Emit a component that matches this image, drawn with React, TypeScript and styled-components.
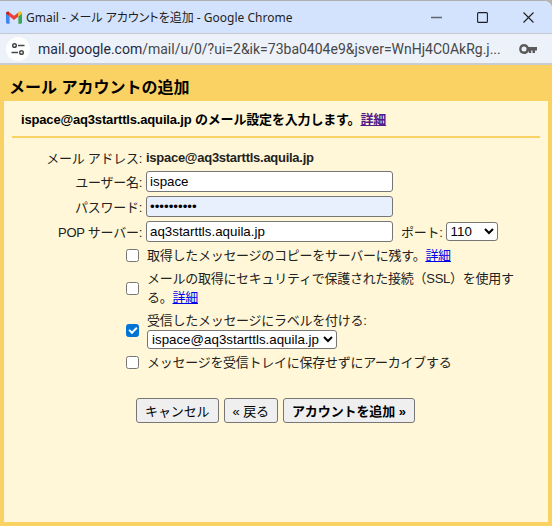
import styled, { createGlobalStyle } from "styled-components";

const FONT = `"Liberation Sans", "Noto Sans CJK JP", sans-serif`;

const GlobalStyle = createGlobalStyle`
  html, body {
    margin: 0;
    padding: 0;
    background: #b4b4b4;
  }
  #root {
    width: 552px;
    height: 526px;
  }
`;

const Window = styled.div`
  width: 552px;
  height: 526px;
  box-sizing: border-box;
  border-top: 1px solid #b0b0b0;
  display: flex;
  flex-direction: column;
  overflow: hidden;
  border-top-right-radius: 8px;
  background: #fff7d7;
`;

const TitleBar = styled.div`
  height: 32px;
  flex: none;
  background: #d3e3fd;
  display: flex;
  align-items: center;
  padding-left: 6px;
  font: 12px "Noto Sans", "Noto Sans CJK JP", sans-serif;
  font-feature-settings: "palt";
  color: #1f1f1f;
`;

const TitleText = styled.span`
  flex: 1;
  margin-left: 4px;
  white-space: nowrap;
`;

const WinButton = styled.div`
  width: 46px;
  height: 31px;
  display: flex;
  align-items: center;
  justify-content: center;
  &:last-child {
    margin-right: 1px;
  }
`;

const AddressBar = styled.div`
  height: 32px;
  flex: none;
  box-sizing: border-box;
  background: #edf2fa;
  border-top: 1px solid #c4c9d4;
  border-bottom: 2px solid #c9cbd0;
  display: flex;
  align-items: center;
  padding: 0 15px 0 6px;
`;

const SiteBadge = styled.div`
  width: 24px;
  height: 24px;
  border-radius: 50%;
  background: #fff;
  display: flex;
  align-items: center;
  justify-content: center;
  flex: none;
`;

const Url = styled.div`
  flex: 1;
  margin-left: 8px;
  font: 14px "Roboto", "Liberation Sans", sans-serif;
  color: #474747;
  white-space: nowrap;
  span {
    color: #1f2a44;
  }
`;

const Panel = styled.div`
  flex: 1;
  display: flex;
  flex-direction: column;
  background: #fad163;
  padding: 0 4px 4px;
  font: 13px ${FONT};
  letter-spacing: -0.27px;
  color: #222;
`;

const Heading = styled.h1`
  margin: 0;
  height: 36px;
  box-sizing: border-box;
  display: flex;
  align-items: center;
  padding: 5px 0 0 5px;
  font: bold 16px ${FONT};
  letter-spacing: 0;
  color: #000;
`;

const Body = styled.div`
  flex: 1;
  background: #fff7d7;
  padding: 0 8px;
`;

const Intro = styled.div`
  height: 37px;
  box-sizing: border-box;
  border-bottom: 2px solid #fad163;
  padding: 10px 0 0 9px;
  font: bold 13px/17px ${FONT};
  letter-spacing: -0.17px;
  color: #000;
`;

const Link = styled.a<{ $visited?: boolean }>`
  color: ${(p) => (p.$visited ? "#551a8b" : "#0000ee")};
  text-decoration: underline;
  cursor: pointer;
`;

const Fields = styled.div`
  display: grid;
  grid-template-columns: 122px auto;
  column-gap: 4px;
  row-gap: 4px;
  margin-top: 10px;
  margin-left: 8px;
  align-items: center;
`;

const FieldLabel = styled.label`
  text-align: right;
  white-space: nowrap;
`;

const FieldValue = styled.div<{ $bold?: boolean }>`
  display: flex;
  align-items: center;
  min-height: 19px;
  font-weight: ${(p) => (p.$bold ? "bold" : "normal")};
  color: #222;
`;

const TextInput = styled.input<{ $filled?: boolean }>`
  width: 247px;
  height: 21px;
  box-sizing: border-box;
  border: 1px solid #767676;
  border-radius: 3px;
  padding: 0 3px;
  margin: 0;
  font: 13.33px "Liberation Sans", sans-serif;
  color: #000;
  background: ${(p) => (p.$filled ? "#e8f0fe" : "#fff")};
  outline: none;
`;

const PortLabel = styled.span`
  margin-left: 8px;
  margin-right: 3px;
`;

const Select = styled.select<{ $width: number }>`
  height: 19px;
  box-sizing: border-box;
  border: 1px solid #767676;
  border-radius: 3px;
  background: #fff;
  margin: 0;
  font: 13.33px "Liberation Sans", sans-serif;
  letter-spacing: 0;
  color: #000;
  width: ${(p) => p.$width}px;
`;

const Options = styled.div`
  display: flex;
  flex-direction: column;
  gap: 4px;
  margin: 4px 20px 0 114px;
`;

const OptionRow = styled.div`
  display: flex;
  align-items: center;
  gap: 8px;
  line-height: 19px;
`;

const Check = styled.input`
  appearance: none;
  width: 13px;
  height: 13px;
  margin: 0;
  flex: none;
  box-sizing: border-box;
  border: 1px solid #767676;
  border-radius: 2.5px;
  background: #fff;
  display: flex;
  align-items: center;
  justify-content: center;
  &:checked {
    border-color: #0075d5;
    background: #0075d5;
  }
  &:checked::after {
    content: "";
    width: 6px;
    height: 3px;
    margin-top: -2px;
    border-left: 2px solid #fff;
    border-bottom: 2px solid #fff;
    transform: rotate(-45deg);
  }
`;

const OptionText = styled.div`
  flex: 1;
`;

const Actions = styled.div`
  display: flex;
  gap: 5px;
  margin: 26px 0 0 124px;
`;

const Button = styled.button<{ $primary?: boolean }>`
  height: 25px;
  box-sizing: border-box;
  padding: 0 8px;
  border: 1px solid #767676;
  border-radius: 3px;
  background: #efefef;
  font: ${(p) => (p.$primary ? "bold" : "normal")} 13px ${FONT};
  letter-spacing: -0.1px;
  color: #000;
  white-space: nowrap;
`;

function GmailLogo() {
  return (
    <svg width="16" height="13" viewBox="0 0 16 13">
      <path d="M0 2.2V11.6c0 .6.5 1.1 1.1 1.1h2.5V5.6z" fill="#4285f4" />
      <path d="M16 2.2V11.6c0 .6-.5 1.1-1.1 1.1h-2.5V5.6z" fill="#34a853" />
      <path d="M3.6 5.6V1.4L8 4.8l4.4-3.4v4.2L8 9z" fill="#ea4335" />
      <path d="M0 2.2C0 .8 1.7 0 2.8.8l.8.6v4.2L0 2.8z" fill="#c5221f" />
      <path d="M16 2.2C16 .8 14.3 0 13.2.8l-.8.6v4.2L16 2.8z" fill="#fbbc04" />
    </svg>
  );
}

function TuneIcon() {
  return (
    <svg width="16" height="16" viewBox="0 0 16 16" fill="none" stroke="#474747" strokeWidth="1.5">
      <circle cx="4.5" cy="4.5" r="1.8" />
      <path d="M8 4.500h6.500" />
      <circle cx="11.5" cy="11.5" r="1.8" />
      <path d="M1.500 11.500H8" />
    </svg>
  );
}

function KeyIcon() {
  return (
    <svg width="18" height="10" viewBox="0 0 18 10" fill="#5b5b5b">
      <path d="M5 0a5 5 0 0 1 4.600 3H18v3.500h-2V9h-2.500V6.500h-1.300V9H9.800V7A5 5 0 1 1 5 0zm0 2.500a2.500 2.500 0 1 0 0 5 2.500 2.500 0 0 0 0-5z" fillRule="evenodd" />
    </svg>
  );
}

function MinimizeIcon() {
  return (
    <svg width="11" height="11" viewBox="0 0 11 11">
      <path d="M0 5.500h11" stroke="#5f6670" strokeWidth="1.300" />
    </svg>
  );
}

function MaximizeIcon() {
  return (
    <svg width="11" height="11" viewBox="0 0 11 11" fill="none">
      <rect x=".6" y=".6" width="9.8" height="9.8" rx="1" stroke="#1f1f1f" strokeWidth="1.1" />
    </svg>
  );
}

function CloseIcon() {
  return (
    <svg width="11" height="11" viewBox="0 0 11 11">
      <path d="M.5.500l10 10M10.500.500l-10 10" stroke="#1f1f1f" strokeWidth="1.1" />
    </svg>
  );
}

export default function App() {
  return (
    <>
      <GlobalStyle />
      <Window>
        <TitleBar>
          <GmailLogo />
          <TitleText>Gmail - メール アカウントを追加 - Google Chrome</TitleText>
          <WinButton><MinimizeIcon /></WinButton>
          <WinButton><MaximizeIcon /></WinButton>
          <WinButton><CloseIcon /></WinButton>
        </TitleBar>
        <AddressBar>
          <SiteBadge><TuneIcon /></SiteBadge>
          <Url><span>mail.google.com</span>/mail/u/0/?ui=2&amp;ik=73ba0404e9&amp;jsver=WnHj4C0AkRg.j...</Url>
          <KeyIcon />
        </AddressBar>
        <Panel>
          <Heading>メール アカウントの追加</Heading>
          <Body>
            <Intro>
              ispace@aq3starttls.aquila.jp のメール設定を入力します。<Link $visited>詳細</Link>
            </Intro>
            <Fields>
              <FieldLabel>メール アドレス:</FieldLabel>
              <FieldValue $bold>ispace@aq3starttls.aquila.jp</FieldValue>
              <FieldLabel>ユーザー名:</FieldLabel>
              <FieldValue><TextInput defaultValue="ispace" /></FieldValue>
              <FieldLabel>パスワード:</FieldLabel>
              <FieldValue><TextInput type="password" $filled defaultValue="0123456789" /></FieldValue>
              <FieldLabel>POP サーバー:</FieldLabel>
              <FieldValue>
                <TextInput defaultValue="aq3starttls.aquila.jp" />
                <PortLabel>ポート:</PortLabel>
                <Select $width={52} defaultValue="110">
                  <option>110</option>
                  <option>995</option>
                </Select>
              </FieldValue>
            </Fields>
            <Options>
              <OptionRow>
                <Check type="checkbox" />
                <OptionText>取得したメッセージのコピーをサーバーに残す。<Link>詳細</Link></OptionText>
              </OptionRow>
              <OptionRow>
                <Check type="checkbox" />
                <OptionText>メールの取得にセキュリティで保護された接続（SSL）を使用する。<Link>詳細</Link></OptionText>
              </OptionRow>
              <OptionRow>
                <Check type="checkbox" defaultChecked />
                <OptionText>
                  受信したメッセージにラベルを付ける:
                  <br />
                  <Select $width={190} defaultValue="ispace@aq3starttls.aquila.jp">
                    <option>ispace@aq3starttls.aquila.jp</option>
                  </Select>
                </OptionText>
              </OptionRow>
              <OptionRow>
                <Check type="checkbox" />
                <OptionText>メッセージを受信トレイに保存せずにアーカイブする</OptionText>
              </OptionRow>
            </Options>
            <Actions>
              <Button>キャンセル</Button>
              <Button>« 戻る</Button>
              <Button $primary>アカウントを追加 »</Button>
            </Actions>
          </Body>
        </Panel>
      </Window>
    </>
  );
}
